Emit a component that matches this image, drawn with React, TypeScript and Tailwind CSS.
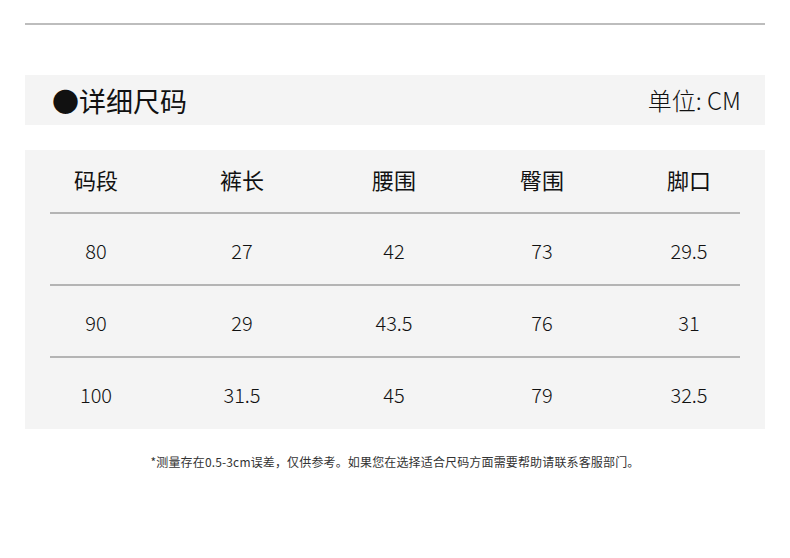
import React from "react";

const cols = ["码段", "裤长", "腰围", "臀围", "脚口"];
const rows = [
  ["80", "27", "42", "73", "29.5"],
  ["90", "29", "43.5", "76", "31"],
  ["100", "31.5", "45", "79", "32.5"],
];

const grid = "grid grid-cols-[142px_150px_154px_142px_152px]";

export default function App() {
  return (
    <div
      className="w-[790px] h-[558px] bg-white text-[#111]"
      style={{ fontFamily: '"Noto Sans CJK SC", "Noto Sans", sans-serif' }}
    >
      <div className="pt-[23px] px-[25px]">
        <div className="h-[2px] bg-[#bdbdbd]" />
      </div>
      <div className="mt-[50px] mx-[25px] h-[50px] bg-[#f4f4f4] flex items-center justify-between pl-[27px] pr-[24px]">
        <div className="text-[27px] leading-none">●详细尺码</div>
        <div className="text-[24px] leading-none font-light">单位: CM</div>
      </div>
      <div className="mt-[25px] mx-[25px] h-[279px] bg-[#f4f4f4] flex flex-col">
        <div className={`${grid} h-[62px] items-center text-[22px] pb-[4px]`}>
          {cols.map((c) => (
            <div key={c} className="text-center">{c}</div>
          ))}
        </div>
        {rows.map((r, i) => (
          <div key={i} className="flex flex-col">
            <div className="mx-[25px] h-[2px] bg-[#b4b4b4]" />
            <div className={`${grid} h-[70px] items-center text-[20px] pt-[3px] font-light`}>
              {r.map((v, j) => (
                <div key={j} className="text-center">{v}</div>
              ))}
            </div>
          </div>
        ))}
      </div>
      <div className="mt-[24px] text-center text-[12px] tracking-[0.15px] text-[#333]">
        *测量存在0.5-3cm误差，仅供参考。如果您在选择适合尺码方面需要帮助请联系客服部门。
      </div>
    </div>
  );
}
